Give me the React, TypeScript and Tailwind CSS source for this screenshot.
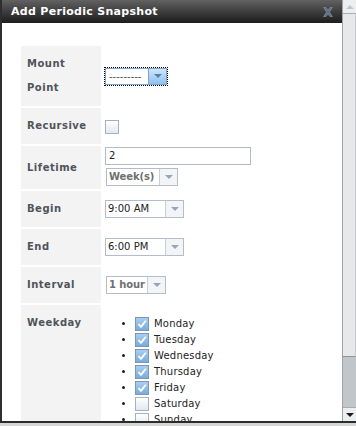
import React from "react";

const days = [
  { name: "Monday", on: true },
  { name: "Tuesday", on: true },
  { name: "Wednesday", on: true },
  { name: "Thursday", on: true },
  { name: "Friday", on: true },
  { name: "Saturday", on: false },
  { name: "Sunday", on: false },
];

function Arrow() {
  return <span className="block w-0 h-0 border-x-[4px] border-x-transparent border-t-[4px] border-t-[#93a5c2]" />;
}

function Select({ value, width, bold }: { value: string; width: string; bold?: boolean }) {
  return (
    <div className={`flex h-[18px] border border-[#b3bccb] bg-white ${width}`}>
      <div
        className={`flex-1 pl-[2px] leading-[16px] whitespace-nowrap overflow-hidden ${
          bold ? "font-bold text-[#707070] tracking-[-0.1px]" : "text-[#222]"
        } text-[10px]`}
      >
        {value}
      </div>
      <div className="w-[18px] shrink-0 border-l border-[#c9cfd9] bg-[#f3f4f6] flex items-center justify-center">
        <Arrow />
      </div>
    </div>
  );
}

function Checkbox({ on }: { on?: boolean }) {
  return (
    <span
      className={`inline-block align-middle w-[14px] h-[14px] border ${
        on
          ? "border-[#7f95b4] bg-linear-to-b from-[#a9cdef] to-[#78addc]"
          : "border-[#a8b1bf] bg-linear-to-b from-[#ffffff] to-[#e2e8f0]"
      }`}
    >
      {on && (
        <svg viewBox="0 0 12 12" className="w-[12px] h-[12px]">
          <path d="M2.5 6.2 L5 8.8 L9.8 2.8" fill="none" stroke="#fff" strokeWidth="1.8" />
        </svg>
      )}
    </span>
  );
}

function Label({ children, top }: { children: React.ReactNode; top?: boolean }) {
  return (
    <td
      className={`w-[80px] bg-[#f3f3f3] px-[6px] py-[6px] ${top ? "align-top" : "align-middle"} text-[10px] font-bold leading-[24px] tracking-[0.5px] text-[#50545a]`}
    >
      {children}
    </td>
  );
}

export default function App() {
  return (
    <div className="w-[356px] h-[426px] overflow-hidden bg-[#d6d6d6] font-['DejaVu_Sans',sans-serif]">
      <div className="flex h-[423px] border-b-2 border-[#2c2c2c]">
        {/* dialog */}
        <div className="flex-1 flex flex-col border-l-2 border-[#2e2e2e] bg-white overflow-hidden">
          <div className="h-[23px] shrink-0 flex items-center justify-between bg-linear-to-b from-[#626262] to-[#1d1d1d] pl-[9px] pr-[8px]">
            <span className="text-white font-bold text-[11px] tracking-[0.3px] leading-[23px]">
              Add Periodic Snapshot
            </span>
            <svg viewBox="0 0 12 12" className="w-[12px] h-[12px]">
              <path
                d="M1.5 1.5 L4 1.5 L6 4 L8 1.5 L10.5 1.5 L7.4 6 L10.5 10.5 L8 10.5 L6 8 L4 10.5 L1.5 10.5 L4.6 6 Z"
                fill="#5d7186"
                stroke="#8796a6"
                strokeWidth="0.6"
              />
            </svg>
          </div>

          <div className="flex-1 pl-[17px] pt-[21px] overflow-hidden">
            <table className="border-separate border-spacing-[2px]">
              <tbody>
                <tr className="h-[60px]">
                  <Label>
                    Mount
                    <br />
                    Point
                  </Label>
                  <td className="px-[2px] align-middle">
                    <div className="w-[62px] outline-1 outline-dotted outline-black">
                      <div className="flex h-[17px] border border-[#7fa3cc] bg-white">
                        <div className="flex-1 pl-[3px] text-[10px] leading-[15px] text-[#555]">---------</div>
                        <div className="w-[18px] border-l border-[#7fa3cc] bg-linear-to-b from-[#cfe5fb] to-[#8dc0f1] flex items-center justify-center">
                          <span className="block w-0 h-0 border-x-[4px] border-x-transparent border-t-[4px] border-t-[#5b7ea8]" />
                        </div>
                      </div>
                    </div>
                  </td>
                </tr>
                <tr className="h-[36px]">
                  <Label>Recursive</Label>
                  <td className="px-[2px] align-middle">
                    <Checkbox />
                  </td>
                </tr>
                <tr className="h-[43px]">
                  <Label>Lifetime</Label>
                  <td className="px-[2px] pt-[1px] pb-[3px] align-top">
                    <div className="w-[146px] h-[18px] border border-[#b3bccb] bg-white pl-[3px] text-[10px] leading-[16px] text-[#222]">
                      2
                    </div>
                    <div className="mt-[3px] ml-[1px]">
                      <Select value="Week(s)" width="w-[72px]" bold />
                    </div>
                  </td>
                </tr>
                <tr className="h-[36px]">
                  <Label>Begin</Label>
                  <td className="px-[2px] align-middle">
                    <Select value="9:00 AM" width="w-[79px]" />
                  </td>
                </tr>
                <tr className="h-[36px]">
                  <Label>End</Label>
                  <td className="px-[2px] align-middle">
                    <Select value="6:00 PM" width="w-[79px]" />
                  </td>
                </tr>
                <tr className="h-[36px]">
                  <Label>Interval</Label>
                  <td className="px-[2px] align-middle">
                    <div className="ml-[1px]">
                      <Select value="1 hour" width="w-[60px]" bold />
                    </div>
                  </td>
                </tr>
                <tr>
                  <Label top>Weekday</Label>
                  <td className="px-[2px] align-top">
                    <ul className="list-disc pl-[30px] pt-[11px] pb-[20px] text-[10px] text-[#222] tracking-[0.2px]">
                      {days.map((d) => (
                        <li key={d.name} className="leading-[16px] h-[16px]">
                          <Checkbox on={d.on} />
                          <span className="ml-[5px] align-middle">{d.name}</span>
                        </li>
                      ))}
                    </ul>
                  </td>
                </tr>
              </tbody>
            </table>
          </div>
        </div>

        {/* scrollbar */}
        <div className="w-[14px] flex flex-col bg-[#c1c6cb] border-l border-[#9ea3a8]">
          <div className="h-[14px] border-b border-[#a9adb2] bg-[#eceeef] flex items-center justify-center">
            <span className="block w-0 h-0 border-x-[4px] border-x-transparent border-b-[4px] border-b-[#c3c6c9]" />
          </div>
          <div className="h-[343px] bg-[#e6e8ea] border-b border-[#8e9398] border-r border-r-[#c6c9cc]" />
          <div className="flex-1" />
          <div className="h-[14px] border-t border-[#a9adb2] bg-[#eceeef] flex items-center justify-center">
            <span className="block w-0 h-0 border-x-[4px] border-x-transparent border-t-[4px] border-t-[#1a1a1a]" />
          </div>
        </div>
      </div>
    </div>
  );
}
